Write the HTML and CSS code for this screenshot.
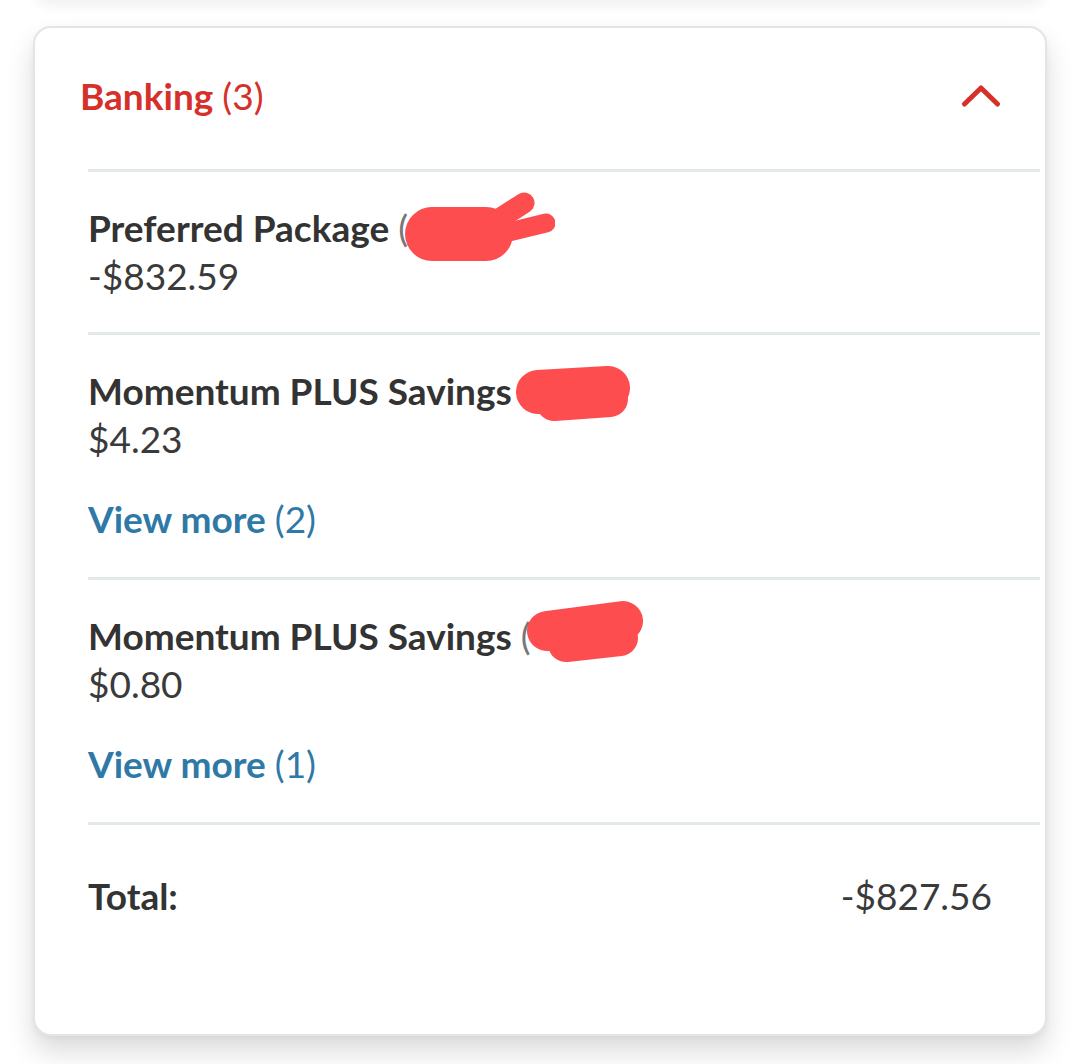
FILE: index.html
```html
<!DOCTYPE html>
<html lang="en">
<head>
<meta charset="utf-8">
<title>Banking</title>
<link rel="stylesheet" href="styles.css">
</head>
<body>
<div class="page">
  <div class="prev"></div>
  <section class="card">
    <header class="head">
      <h2 class="title">Banking <span class="count">(3)</span></h2>
      <svg class="chev" width="40" height="24" viewBox="0 0 40 24" aria-hidden="true">
        <polyline points="3.5,20 20,4 36.5,20" fill="none" stroke="#d6302b" stroke-width="5" stroke-linecap="round" stroke-linejoin="round"/>
      </svg>
    </header>
    <div class="list">
      <div class="row">
        <div class="name">Preferred Package <span class="num">(</span>
          <svg class="redact r1" width="155" height="80" viewBox="0 0 155 80" aria-hidden="true">
            <g stroke="#fd4d4f" stroke-linecap="round" fill="none">
              <path d="M32 44 L86 44" stroke-width="54"/>
              <path d="M88 36 L124 13" stroke-width="21"/>
              <path d="M92 46 L146 33" stroke-width="19"/>
            </g>
          </svg>
        </div>
        <div class="amount">-$832.59</div>
      </div>
      <div class="row">
        <div class="name">Momentum PLUS Savings
          <svg class="redact r2" width="125" height="60" viewBox="0 0 125 60" aria-hidden="true">
            <g stroke="#fd4d4f" stroke-linecap="round" fill="none">
              <path d="M28 27 L98 23" stroke-width="44"/>
              <path d="M44 38 L100 34" stroke-width="36"/>
            </g>
          </svg>
        </div>
        <div class="amount">$4.23</div>
        <div class="more">View more <span class="count">(2)</span></div>
      </div>
      <div class="row">
        <div class="name">Momentum PLUS Savings <span class="num">(</span>
          <svg class="redact r3" width="125" height="70" viewBox="0 0 125 70" aria-hidden="true">
            <g stroke="#fd4d4f" stroke-linecap="round" fill="none">
              <path d="M27 31 L103 21" stroke-width="40"/>
              <path d="M46 44 L100 38" stroke-width="36"/>
            </g>
          </svg>
        </div>
        <div class="amount">$0.80</div>
        <div class="more">View more <span class="count">(1)</span></div>
      </div>
      <div class="row total">
        <span class="label">Total:</span>
        <span class="value">-$827.56</span>
      </div>
    </div>
  </section>
</div>
</body>
</html>
```

FILE: styles.css
```css
html, body {
  margin: 0;
  padding: 0;
  background: #ffffff;
}

body {
  font-family: Lato, "Open Sans", "Liberation Sans", sans-serif;
  color: #333333;
  font-size: 37px;
  line-height: 48px;
  overflow: hidden;
}

.page {
  padding: 26px 33px 28px;
}

.prev {
  height: 40px;
  margin: -66px 0 26px;
  border-radius: 18px;
  box-shadow: 0 6px 14px rgba(0, 0, 0, 0.06);
  background: #ffffff;
}

.card {
  border: 2px solid #e1e6ea;
  border-radius: 18px;
  background: #ffffff;
  box-shadow: 0 16px 28px rgba(0, 0, 0, 0.14), 0 2px 6px rgba(0, 0, 0, 0.05);
}

.head {
  display: flex;
  justify-content: space-between;
  align-items: center;
  padding: 44px 44px 49px 45px;
}

.title {
  margin: 0;
  font-size: 37px;
  font-weight: 700;
  line-height: 48px;
  color: #d6302b;
}

.title .count {
  font-weight: 400;
}

.chev {
  display: block;
}

.list {
  margin: 0 5px 0 53px;
}

.row {
  border-top: 3px solid #e3e8eb;
  padding: 32px 0 32px;
}

.name {
  position: relative;
  font-weight: 700;
  color: #333333;
}

.num {
  font-weight: 400;
  color: #777777;
}

.redact {
  position: absolute;
  display: block;
}

.r1 { left: 312px; top: -14px; }
.r2 { left: 422px; top: -2px; }
.r3 { left: 432px; top: -12px; }

.amount {
  color: #3a3a3a;
}

.more {
  margin: 32px 0 2px;
  font-weight: 700;
  color: #2f79a7;
}

.more .count {
  font-weight: 400;
}

.total {
  display: flex;
  justify-content: space-between;
  padding: 47px 48px 114px 0;
}

.total .label {
  font-weight: 700;
}

.total .value {
  color: #3a3a3a;
}
```
